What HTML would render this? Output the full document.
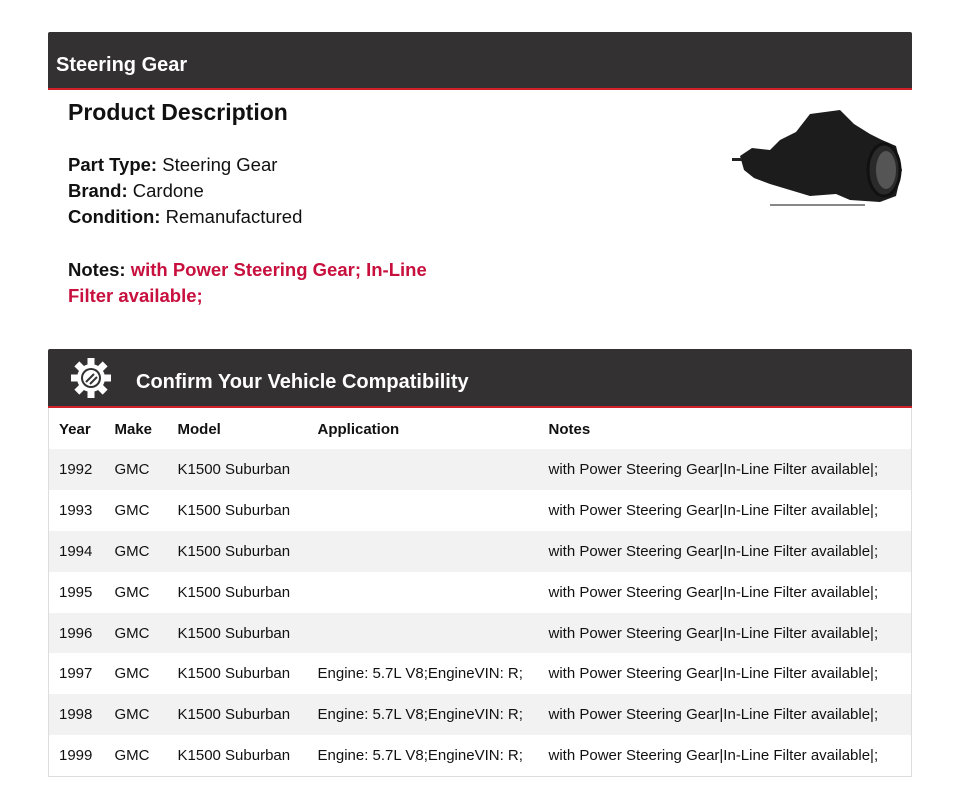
<!DOCTYPE html>
<html><head><meta charset="utf-8"><style>
*{margin:0;padding:0;box-sizing:border-box}
body{width:960px;height:808px;background:#fff;font-family:"Liberation Sans",sans-serif;color:#111;position:relative;overflow:hidden}
.bar{position:absolute;left:48px;width:864px;background:#333132;border-bottom:2px solid #d0202a;color:#fff;font-weight:bold;border-radius:2px 2px 0 0}
.b1{top:32px;height:58px;font-size:20px;padding:22px 0 0 8px}
.b2{top:349px;height:59px;font-size:20px;padding:22px 0 0 88px}
h2{position:absolute;left:68px;top:99px;font-size:23px;font-weight:bold}
.info{position:absolute;left:68px;top:152px;font-size:18.5px;line-height:26px}
.notes{position:absolute;left:68px;top:257px;font-size:18.5px;line-height:26px;font-weight:bold;width:400px}
.notes span{color:#c8103e}
table{position:absolute;left:48px;top:408px;width:864px;border-collapse:collapse;border:1px solid #ddd;border-top:none;font-size:15px}
td,th{height:40.9px;text-align:left;padding:0;white-space:nowrap}
th{font-weight:bold;height:41px;padding-top:2px}
tr:nth-child(even) td{background:#f2f2f2}
td:first-child,th:first-child{padding-left:10px;width:66px}
.c2{width:63px}.c3{width:140px}.c4{width:231px}
</style></head><body>
<div class="bar b1">Steering Gear</div>
<h2>Product Description</h2>
<div class="info"><b>Part Type:</b> Steering Gear<br><b>Brand:</b> Cardone<br><b>Condition:</b> Remanufactured</div>
<div class="notes">Notes: <span>with Power Steering Gear; In-Line Filter available;</span></div>
<svg style="position:absolute;left:730px;top:104px" width="176" height="108" viewBox="0 0 176 108">
<path d="M10 52 L22 44 L40 46 L50 36 L66 28 L80 10 L110 6 L124 20 L140 30 L152 36 L166 42 L172 66 L166 92 L150 98 L120 96 L106 90 L80 92 L60 86 L40 80 L24 74 L14 66 Z" fill="#1c1c1c"/>
<ellipse cx="154" cy="66" rx="16" ry="26" fill="#2a2a2a" stroke="#111" stroke-width="3"/>
<ellipse cx="156" cy="66" rx="10" ry="19" fill="#555"/>
<rect x="2" y="54" width="10" height="3" fill="#222"/>
<rect x="40" y="100" width="95" height="2" fill="#888"/>
</svg>
<div class="bar b2">Confirm Your Vehicle Compatibility</div>
<svg style="position:absolute;left:70px;top:357px" width="42" height="42" viewBox="0 0 42 42">
<g fill="#fff" transform="translate(21 21)">
<circle r="14"/>
<g id="t"><rect x="-3.5" y="-20" width="7" height="8"/></g>
<use href="#t" transform="rotate(45)"/><use href="#t" transform="rotate(90)"/><use href="#t" transform="rotate(135)"/><use href="#t" transform="rotate(180)"/><use href="#t" transform="rotate(225)"/><use href="#t" transform="rotate(270)"/><use href="#t" transform="rotate(315)"/>
<circle r="10" fill="#333132"/><circle r="8" fill="#fff"/>
<path d="M-5 4 L3 -4 M-1 6 L6 -1" stroke="#333" stroke-width="2"/>
</g></svg>
<table>
<tr><th>Year</th><th class="c2">Make</th><th class="c3">Model</th><th class="c4">Application</th><th>Notes</th></tr>
<tr><td>1992</td><td>GMC</td><td>K1500 Suburban</td><td></td><td>with Power Steering Gear|In-Line Filter available|;</td></tr>
<tr><td>1993</td><td>GMC</td><td>K1500 Suburban</td><td></td><td>with Power Steering Gear|In-Line Filter available|;</td></tr>
<tr><td>1994</td><td>GMC</td><td>K1500 Suburban</td><td></td><td>with Power Steering Gear|In-Line Filter available|;</td></tr>
<tr><td>1995</td><td>GMC</td><td>K1500 Suburban</td><td></td><td>with Power Steering Gear|In-Line Filter available|;</td></tr>
<tr><td>1996</td><td>GMC</td><td>K1500 Suburban</td><td></td><td>with Power Steering Gear|In-Line Filter available|;</td></tr>
<tr><td>1997</td><td>GMC</td><td>K1500 Suburban</td><td>Engine: 5.7L V8;EngineVIN: R;</td><td>with Power Steering Gear|In-Line Filter available|;</td></tr>
<tr><td>1998</td><td>GMC</td><td>K1500 Suburban</td><td>Engine: 5.7L V8;EngineVIN: R;</td><td>with Power Steering Gear|In-Line Filter available|;</td></tr>
<tr><td>1999</td><td>GMC</td><td>K1500 Suburban</td><td>Engine: 5.7L V8;EngineVIN: R;</td><td>with Power Steering Gear|In-Line Filter available|;</td></tr>
</table>
</body></html>
